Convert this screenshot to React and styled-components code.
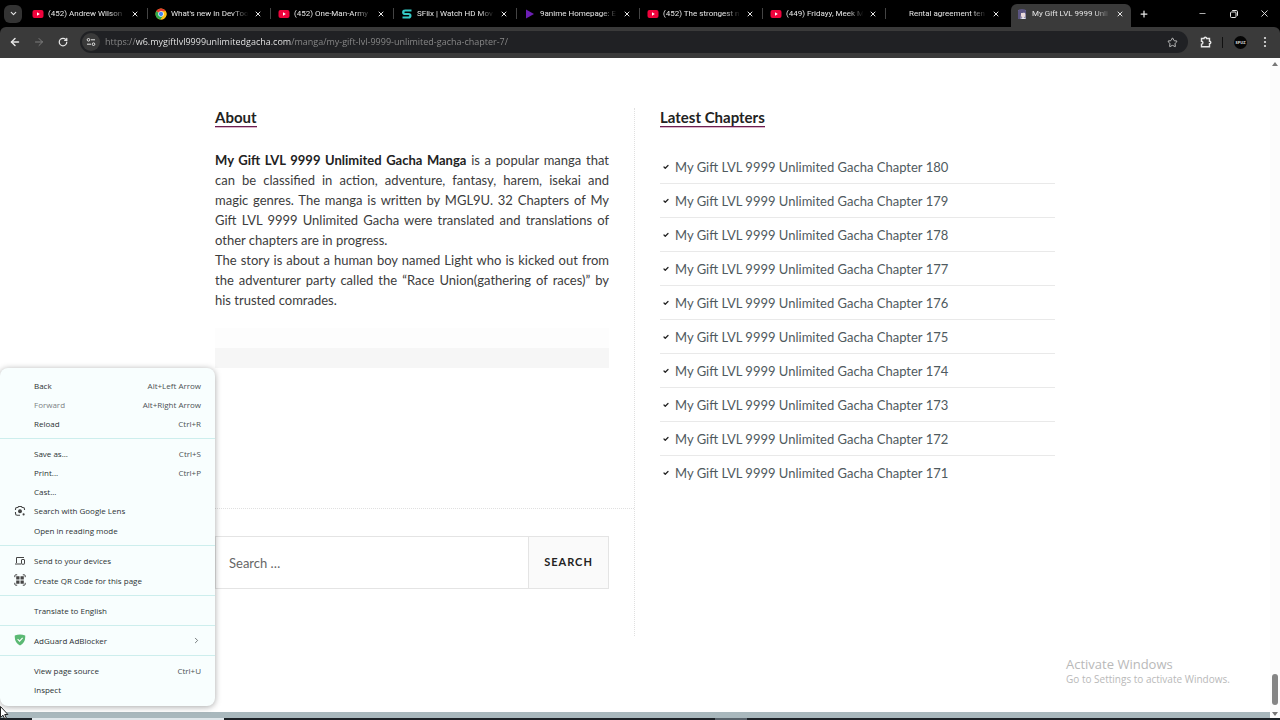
import React, { useState } from "react";
import styled, { createGlobalStyle, css } from "styled-components";
import {
  ArrowLeft,
  ArrowRight,
  Check,
  ChevronDown,
  ChevronRight,
  Minus,
  Plus,
  RotateCw,
  Star,
  X,
} from "lucide-react";

const GlobalStyle = createGlobalStyle`
  * {
    box-sizing: border-box;
  }
  body {
    margin: 0;
    background: #fff;
    font-family: "Open Sans", "Noto Sans", sans-serif;
  }
  button, input {
    font: inherit;
    color: inherit;
  }
`;

const Browser = styled.div`
  position: relative;
  display: flex;
  flex-direction: column;
  min-height: 100vh;
  overflow: hidden;
`;

const TabStrip = styled.header`
  display: flex;
  align-items: stretch;
  height: 27px;
  padding-left: 4px;
  background: #000;
  color: #e6e6e6;
`;

const IconButton = styled.button`
  display: flex;
  align-items: center;
  justify-content: center;
  flex: none;
  width: ${(p) => p.$width || 16}px;
  padding: 0;
  border: none;
  background: transparent;
  color: ${(p) => p.$color || "#e6e6e6"};
`;

const TabSearch = styled(IconButton)`
  align-self: center;
  height: 18px;
  margin-right: 3px;
  border-radius: 6px;
  background: #333;
`;

const Tab = styled.div`
  position: relative;
  display: flex;
  align-items: center;
  flex: 0 1 123px;
  min-width: 0;
  padding: 0 7px;

  ${(p) =>
    p.$divider &&
    css`
      &::after {
        content: "";
        position: absolute;
        top: 8px;
        right: 0;
        width: 1px;
        height: 11px;
        background: #444;
      }
    `}

  ${(p) =>
    p.$active &&
    css`
      flex-basis: 120px;
      margin: 4px 0 0 2px;
      padding: 0 5px 4px;
      border-radius: 6px 6px 0 0;
      background: #3a3a3a;
    `}
`;

const Favicon = styled.svg`
  flex: none;
  width: 12px;
  height: 12px;
`;

const TabTitle = styled.button`
  flex: 1;
  min-width: 0;
  margin: 0 2px 0 4px;
  padding: 0;
  border: none;
  background: transparent;
  overflow: hidden;
  white-space: nowrap;
  text-align: left;
  font-family: Roboto, sans-serif;
  font-size: 8px;
  line-height: 12px;
  mask-image: linear-gradient(to right, #000 78%, transparent 98%);
`;

const WindowControls = styled.div`
  display: flex;
  margin-left: auto;
`;

const Toolbar = styled.div`
  display: flex;
  align-items: center;
  height: 31px;
  padding: 0 7px 1px 6px;
  background: #3a3a3a;
  border-radius: 6px 6px 0 0;
`;

const ToolbarBack = styled.div`
  background: #000;
`;

const AddressBar = styled.div`
  display: flex;
  align-items: center;
  flex: 1;
  height: 22px;
  margin: 0 8px 0 8px;
  padding: 0 6px 0 2px;
  border-radius: 11px;
  background: #202124;
`;

const SiteInfo = styled(IconButton)`
  height: 18px;
  border-radius: 9px;
  background: #3a3a3a;
`;

const AddressInput = styled.input`
  flex: 1;
  min-width: 0;
  margin-left: 5px;
  padding: 0;
  border: none;
  outline: none;
  font-size: 9px;
  line-height: 16px;
  color: transparent;
  background: linear-gradient(
    to right,
    #8c8c8c 31px,
    #f1f1f1 31px 186px,
    #8c8c8c 186px
  );
  background-clip: text;
`;

const ToolbarDivider = styled.span`
  width: 1px;
  height: 11px;
  margin: 0 11px 0 6px;
  background: #111;
`;

const Avatar = styled.button`
  width: 13px;
  height: 13px;
  margin-right: 10px;
  padding: 0;
  border: none;
  border-radius: 50%;
  background: #050505;
  color: #ddd;
  font-size: 4px;
  font-weight: 700;
  line-height: 13px;
`;

const Viewport = styled.div`
  display: flex;
  flex: 1;
`;

const Page = styled.main`
  flex: 1;
  padding-top: 50px;
  font-family: Lato, sans-serif;
`;

const Columns = styled.div`
  display: grid;
  grid-template-columns: 1fr 1fr;
  max-width: 840px;
  margin: 0 auto;
`;

const LeftColumn = styled.div`
  border-right: 1px dotted #e0e0e0;
`;

const Widget = styled.section`
  padding-right: 25px;
`;

const ChaptersWidget = styled.section`
  padding-left: 25px;
`;

const SearchWidget = styled(Widget)`
  margin-top: 140px;
  padding-top: 27px;
  padding-bottom: 47px;
  border-top: 1px dotted #e0e0e0;
`;

const WidgetTitle = styled.h2`
  display: table;
  margin: 0 0 23px;
  border-bottom: 1px solid #6b1f4f;
  box-shadow: 0 1px 0 #dcb4cb;
  color: #222;
  font-size: 15px;
  font-weight: 700;
  line-height: 18px;
`;

const About = styled.div`
  color: #3c3c3c;
  font-size: 13px;
  line-height: 20px;
  text-align: justify;

  p {
    margin: 0;
  }
  strong {
    color: #222;
  }
`;

const Band = styled.div`
  height: 20px;
  background: ${(p) => p.$color};
`;

const Bands = styled.div`
  margin-top: 18px;
`;

const ChapterList = styled.ul`
  margin: 0;
  padding: 0;
  list-style: none;
`;

const Chapter = styled.li`
  display: flex;
  align-items: center;
  gap: 6px;
  padding: 7px 0 6px 3px;
  border-bottom: 1px solid #e9e9e9;
  color: #222;
  line-height: 20px;

  &:last-child {
    border-bottom: none;
  }
`;

const ChapterLink = styled.a`
  color: #4f5a5e;
  font-size: 13px;
  text-decoration: none;
`;

const SearchForm = styled.form`
  display: flex;
  height: 53px;
  border: 1px solid #e4e4e4;
`;

const SearchInput = styled.input`
  flex: 1;
  min-width: 0;
  padding: 0 13px;
  border: none;
  outline: none;
  background: #fff;
  font-size: 13px;

  &::placeholder {
    color: #666;
    opacity: 1;
  }
`;

const SearchButton = styled.button`
  width: 80px;
  padding: 0 0 2px;
  border: none;
  border-left: 1px solid #e4e4e4;
  background: #fafafa;
  color: #222;
  font-size: 11px;
  font-weight: 700;
  letter-spacing: 1px;
`;

const Scrollbar = styled.div`
  display: flex;
  flex-direction: column;
  align-items: center;
  width: 10px;
  padding: 4px 0 2px;
  background: #fcfcfc;
`;

const Thumb = styled.div`
  width: 6px;
  height: 31px;
  margin: auto 0 7px;
  border-radius: 3px;
  background: #858585;
`;

const Arrow = styled.span`
  border: 3px solid transparent;
  border-top-width: ${(p) => (p.$down ? 4 : 0)}px;
  border-bottom-width: ${(p) => (p.$down ? 0 : 4)}px;
  border-top-color: #777;
  border-bottom-color: #777;
`;

const Taskbar = styled.footer`
  display: flex;
  height: 2px;
  background: #1c2126;
`;

const TaskbarLight = styled.span`
  width: ${(p) => p.$width}px;
  margin-left: ${(p) => p.$offset}px;
  background: ${(p) => p.$color};
`;

const StatusEdge = styled.div`
  position: absolute;
  left: 0;
  right: 10px;
  bottom: 2px;
  height: 6px;
  background: #a9b8bd;
`;

const Watermark = styled.aside`
  position: absolute;
  left: 1066px;
  bottom: 34px;
  color: #b9b9b9;
  font-size: 10px;
  line-height: 13px;
`;

const WatermarkTitle = styled.div`
  font-size: 13px;
  line-height: 17px;
`;

const Menu = styled.nav`
  position: absolute;
  left: 0;
  bottom: 14px;
  width: 215px;
  padding: 8px 0 7px;
  border-radius: 8px;
  background: #f8fefe;
  box-shadow: 0 1px 6px rgba(0, 0, 0, 0.35);
`;

const MenuItem = styled.button`
  display: flex;
  align-items: center;
  width: 100%;
  height: ${(p) => (p.$tall ? 20 : 19)}px;
  padding: 0 14px 1px;
  border: none;
  background: transparent;
  color: #2c3234;
  font-size: 8px;
  text-align: left;

  &:disabled {
    color: #7c8284;
  }
`;

const MenuIcon = styled.span`
  display: flex;
  width: 20px;
  color: #444;
`;

const Shortcut = styled.span`
  display: flex;
  margin-left: auto;
  color: #4c5254;
`;

const MenuDivider = styled.hr`
  height: 1px;
  margin: 5px 0;
  border: none;
  background: #cdeeed;
`;

const Cursor = styled.svg`
  position: absolute;
  left: 0;
  bottom: 0;
  width: 9px;
  height: 14px;
`;

const YoutubeIcon = () => (
  <Favicon viewBox="0 0 12 12">
    <rect x="0.5" y="2" width="11" height="8" rx="2" fill="#f0033c" />
    <path d="M5 4.3v3.4L7.8 6z" fill="#fff" />
  </Favicon>
);

const ChromeIcon = () => (
  <Favicon viewBox="0 0 24 24">
    <circle cx="12" cy="12" r="11" fill="#fbc116" />
    <path d="M12 12 2.5 6.5A11 11 0 0 1 21.5 6.5z" fill="#e33b2e" />
    <path d="M12 12 2.5 6.5A11 11 0 0 0 11 23l6-8z" fill="#2da94f" />
    <path d="M12 6.5h9.5A11 11 0 0 1 11 23l5.8-8.2z" fill="#fbc116" />
    <circle cx="12" cy="12" r="5.5" fill="#fff" />
    <circle cx="12" cy="12" r="4.3" fill="#4285f4" />
  </Favicon>
);

const SflixIcon = () => (
  <Favicon viewBox="0 0 12 12">
    <path
      d="M10.5 2.5H4.2Q2.2 2.5 2.2 4.2T4.2 6h3.4q1.8 0 1.8 1.7T7.6 9.5H1.5"
      fill="none"
      stroke="#35c9c5"
      strokeWidth="2.2"
    />
  </Favicon>
);

const NineAnimeIcon = () => (
  <Favicon viewBox="0 0 12 12">
    <path d="M2 1.5v9L10 6z" fill="#6d1fb5" />
  </Favicon>
);

const MangaIcon = () => (
  <Favicon viewBox="0 0 12 12">
    <path d="M2 2h8v9H2z" fill="#8f8ca8" />
    <path d="M2 6V3q0-2 4-2t4 2v3L8 4 5 6l-1 5H2z" fill="#5a5480" />
    <path d="M5 5h4v3.5L7 10 5 8z" fill="#ead9d9" />
    <path d="M7 9l3 2H5z" fill="#e9e9f2" />
  </Favicon>
);

const BlankIcon = () => <Favicon viewBox="0 0 12 12" />;

const RestoreIcon = () => (
  <svg width="8" height="8" viewBox="0 0 8 8" fill="none" stroke="currentColor">
    <rect x="0.5" y="2" width="5.5" height="5.5" rx="1" />
    <path d="M2.2 0.5h4Q7.5 0.5 7.5 1.8v4" />
  </svg>
);

const TuneIcon = () => (
  <svg width="10" height="10" viewBox="0 0 10 10" fill="none" stroke="currentColor">
    <circle cx="2.5" cy="2.8" r="1.3" />
    <path d="M5 2.8h4" />
    <circle cx="7.5" cy="7.2" r="1.3" />
    <path d="M1 7.2h4" />
  </svg>
);

const PuzzleIcon = () => (
  <svg width="12" height="12" viewBox="0 0 12 12" fill="none" stroke="currentColor" strokeWidth="1.4">
    <path d="M1.5 2.5H4a1.3 1.3 0 0 1 2.6 0h2.9v2.7a1.3 1.3 0 0 1 0 2.6v2.9h-8V8.1a1.4 1.4 0 0 0 0-2.8z" />
  </svg>
);

const DotsIcon = () => (
  <svg width="4" height="12" viewBox="0 0 4 12" fill="currentColor">
    <circle cx="2" cy="2" r="1.1" />
    <circle cx="2" cy="6" r="1.1" />
    <circle cx="2" cy="10" r="1.1" />
  </svg>
);

const LensIcon = () => (
  <svg width="12" height="12" viewBox="0 0 12 12" fill="none" stroke="currentColor" strokeWidth="1.1">
    <path d="M1.5 5V4q0-1.5 1.5-1.5h.8l.8-1h2.8l.8 1H9q1.5 0 1.5 1.5v1M1.5 7v1.5Q1.5 10.3 3.2 10.3H6" />
    <circle cx="6" cy="6.2" r="1.4" fill="currentColor" />
    <circle cx="9.6" cy="9.4" r="0.5" fill="currentColor" />
  </svg>
);

const DevicesIcon = () => (
  <svg width="12" height="12" viewBox="0 0 12 12" fill="none" stroke="currentColor">
    <path d="M2.5 8V2.5h7.5M1 9h6" />
    <rect x="7.5" y="4.5" width="3" height="4.7" rx="0.5" />
  </svg>
);

const QrIcon = () => (
  <svg width="12" height="12" viewBox="0 0 12 12" fill="none" stroke="currentColor">
    <path d="M0.8 3.2V1.8q0-1 1-1h1.4M8.8 0.8h1.4q1 0 1 1v1.4M11.2 8.8v1.4q0 1-1 1H8.8M3.2 11.2H1.8q-1 0-1-1V8.8" />
    <path
      d="M2.2 2.2h3.3v3.3H2.2zM6.5 2.2h3.3v3.3H6.5zM2.2 6.5h3.3v3.3H2.2zM6.5 6.5h3.3v3.3H6.5z"
      fill="currentColor"
      stroke="none"
    />
  </svg>
);

const ShieldIcon = () => (
  <svg width="12" height="12" viewBox="0 0 12 12">
    <path d="M0.8 1.5Q6-0.3 11.2 1.5 11.8 8.5 6 11.6 0.2 8.5 0.8 1.5z" fill="#5bb974" />
    <path d="M3.6 5.2l2 2 3-3.4" fill="none" stroke="#fff" strokeWidth="1.1" />
  </svg>
);

const tabs = [
  { title: "(452) Andrew Wilson", Icon: YoutubeIcon },
  { title: "What's new in DevToo", Icon: ChromeIcon },
  { title: "(452) One-Man-Army", Icon: YoutubeIcon },
  { title: "SFlix | Watch HD Mov", Icon: SflixIcon },
  { title: "9anime Homepage: E", Icon: NineAnimeIcon },
  { title: "(452) The strongest n", Icon: YoutubeIcon },
  { title: "(449) Fridayy, Meek M", Icon: YoutubeIcon },
  { title: "Rental agreement ten", Icon: BlankIcon },
  { title: "My Gift LVL 9999 Unli", Icon: MangaIcon },
];

const menuGroups = [
  [
    { label: "Back", keys: "Alt+Left Arrow" },
    { label: "Forward", keys: "Alt+Right Arrow", disabled: true },
    { label: "Reload", keys: "Ctrl+R" },
  ],
  [
    { label: "Save as...", keys: "Ctrl+S" },
    { label: "Print...", keys: "Ctrl+P" },
    { label: "Cast..." },
    { label: "Search with Google Lens", Icon: LensIcon, tall: true },
    { label: "Open in reading mode" },
  ],
  [
    { label: "Send to your devices", Icon: DevicesIcon, tall: true },
    { label: "Create QR Code for this page", Icon: QrIcon },
  ],
  [{ label: "Translate to English" }],
  [{ label: "AdGuard AdBlocker", Icon: ShieldIcon, submenu: true }],
  [{ label: "View page source", keys: "Ctrl+U" }, { label: "Inspect" }],
];

const chapters = [180, 179, 178, 177, 176, 175, 174, 173, 172, 171];

const App = () => {
  const [active, setActive] = useState(8);
  const [query, setQuery] = useState("");

  return (
    <Browser>
      <GlobalStyle />
      <TabStrip>
        <TabSearch $width={18} aria-label="Search tabs">
          <ChevronDown size={9} strokeWidth={3} />
        </TabSearch>
        {tabs.map(({ title, Icon }, i) => (
          <Tab key={title} $active={i === active} $divider={i !== active && i !== active - 1}>
            <Icon />
            <TabTitle onClick={() => setActive(i)}>{title}</TabTitle>
            <IconButton $width={12} aria-label="Close tab">
              <X size={8} strokeWidth={3} />
            </IconButton>
          </Tab>
        ))}
        <IconButton $width={26} aria-label="New tab">
          <Plus size={10} strokeWidth={3} />
        </IconButton>
        <WindowControls>
          <IconButton $width={31} aria-label="Minimize">
            <Minus size={9} />
          </IconButton>
          <IconButton $width={31} aria-label="Restore">
            <RestoreIcon />
          </IconButton>
          <IconButton $width={31} aria-label="Close">
            <X size={11} />
          </IconButton>
        </WindowControls>
      </TabStrip>

      <ToolbarBack>
        <Toolbar>
          <IconButton $width={18} aria-label="Back">
            <ArrowLeft size={12} strokeWidth={3} />
          </IconButton>
          <IconButton $width={30} $color="#7d7d7d" aria-label="Forward">
            <ArrowRight size={12} strokeWidth={2} />
          </IconButton>
          <IconButton $width={18} aria-label="Reload">
            <RotateCw size={10} strokeWidth={3} />
          </IconButton>
          <AddressBar>
            <SiteInfo $width={18} aria-label="Site information">
              <TuneIcon />
            </SiteInfo>
            <AddressInput
              aria-label="Address"
              defaultValue="https://w6.mygiftlvl9999unlimitedgacha.com/manga/my-gift-lvl-9999-unlimited-gacha-chapter-7/"
            />
            <IconButton $width={20} $color="#c8c8c8" aria-label="Bookmark">
              <Star size={11} />
            </IconButton>
          </AddressBar>
          <IconButton $width={20} aria-label="Extensions">
            <PuzzleIcon />
          </IconButton>
          <ToolbarDivider />
          <Avatar aria-label="Profile">SPUZ</Avatar>
          <IconButton $width={16} aria-label="Menu">
            <DotsIcon />
          </IconButton>
        </Toolbar>
      </ToolbarBack>

      <Viewport>
        <Page>
          <Columns>
            <LeftColumn>
              <Widget>
                <WidgetTitle>About</WidgetTitle>
                <About>
                  <p>
                    <strong>My Gift LVL 9999 Unlimited Gacha Manga</strong> is a popular manga that
                    can be classified in action, adventure, fantasy, harem, isekai and magic genres.
                    The manga is written by MGL9U. 32 Chapters of My Gift LVL 9999 Unlimited Gacha
                    were translated and translations of other chapters are in progress.
                  </p>
                  <p>
                    The story is about a human boy named Light who is kicked out from the adventurer
                    party called the “Race Union(gathering of races)” by his trusted comrades.
                  </p>
                </About>
                <Bands>
                  <Band $color="#fdfdfd" />
                  <Band $color="#f6f6f6" />
                </Bands>
              </Widget>
              <SearchWidget>
                <SearchForm onSubmit={(e) => e.preventDefault()}>
                  <SearchInput
                    type="search"
                    aria-label="Search"
                    placeholder="Search …"
                    value={query}
                    onChange={(e) => setQuery(e.target.value)}
                  />
                  <SearchButton type="submit">SEARCH</SearchButton>
                </SearchForm>
              </SearchWidget>
            </LeftColumn>
            <ChaptersWidget>
              <WidgetTitle>Latest Chapters</WidgetTitle>
              <ChapterList>
                {chapters.map((n) => (
                  <Chapter key={n}>
                    <Check size={6} strokeWidth={5} />
                    <ChapterLink href={`#chapter-${n}`}>
                      My Gift LVL 9999 Unlimited Gacha Chapter {n}
                    </ChapterLink>
                  </Chapter>
                ))}
              </ChapterList>
            </ChaptersWidget>
          </Columns>
        </Page>
        <Scrollbar>
          <Arrow />
          <Thumb />
          <Arrow $down />
        </Scrollbar>
      </Viewport>
      <Taskbar>
        <TaskbarLight $offset={32} $width={192} $color="#dfe6ea" />
        <TaskbarLight $offset={491} $width={32} $color="#59636b" />
      </Taskbar>

      <StatusEdge />
      <Watermark>
        <WatermarkTitle>Activate Windows</WatermarkTitle>
        Go to Settings to activate Windows.
      </Watermark>

      <Menu>
        {menuGroups.map((group, i) => (
          <React.Fragment key={group[0].label}>
            {i > 0 && <MenuDivider />}
            {group.map(({ label, keys, Icon, tall, disabled, submenu }) => (
              <MenuItem key={label} $tall={tall} disabled={disabled}>
                <MenuIcon>{Icon && <Icon />}</MenuIcon>
                {label}
                {keys && <Shortcut>{keys}</Shortcut>}
                {submenu && (
                  <Shortcut>
                    <ChevronRight size={9} />
                  </Shortcut>
                )}
              </MenuItem>
            ))}
          </React.Fragment>
        ))}
      </Menu>
      <Cursor viewBox="0 0 9 14">
        <path d="M0.5 0.5v11l2.5-2.3 1.7 3.8 1.7-.8-1.7-3.7h3.2z" fill="#fff" stroke="#222" />
      </Cursor>
    </Browser>
  );
};

export default App;
